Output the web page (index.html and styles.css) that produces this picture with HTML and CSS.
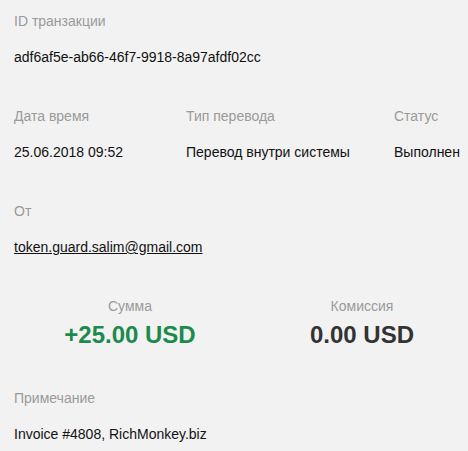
FILE: index.html
```html
<!DOCTYPE html>
<html>
<head>
  <meta charset="UTF-8" />
  <meta name="viewport" content="width=device-width, initial-scale=1.0" />
  <title>Транзакция</title>
  <link rel="stylesheet" href="styles.css">
</head>
<body>

  <div class="details">
    <div class="field">
      <div class="label">ID транзакции</div>
      <div class="value">adf6af5e-ab66-46f7-9918-8a97afdf02cc</div>
    </div>

    <div class="row">
      <div class="field col-date">
        <div class="label">Дата время</div>
        <div class="value">25.06.2018 09:52</div>
      </div>
      <div class="field col-type">
        <div class="label">Тип перевода</div>
        <div class="value">Перевод внутри системы</div>
      </div>
      <div class="field">
        <div class="label">Статус</div>
        <div class="value">Выполнен</div>
      </div>
    </div>

    <div class="field">
      <div class="label">От</div>
      <div class="value"><a href="#" class="email">token.guard.salim@gmail.com</a></div>
    </div>

    <div class="amounts">
      <div class="amount-box">
        <div class="label">Сумма</div>
        <div class="amount plus">+25.00 USD</div>
      </div>
      <div class="amount-box">
        <div class="label">Комиссия</div>
        <div class="amount">0.00 USD</div>
      </div>
    </div>

    <div class="field">
      <div class="label">Примечание</div>
      <div class="value">Invoice #4808, RichMonkey.biz</div>
    </div>
  </div>

</body>
</html>
```

FILE: styles.css
```css
body {
  font-family: Arial, "Liberation Sans", sans-serif;
  font-size: 14px;
  line-height: 20px;
  background: #f2f2f2;
  color: #111;
  margin: 0;
  padding: 11px 0 0 14px;
  overflow: hidden;
}

.details {
  display: flex;
  flex-direction: column;
  gap: 39px;
}

.label {
  color: #9a9a9a;
  margin-bottom: 16px;
}

.value {
  color: #111;
  white-space: nowrap;
}

.email {
  color: #111;
  text-decoration: underline;
}

.row {
  display: flex;
}

.col-date {
  width: 172px;
}

.col-type {
  width: 208px;
}

.amounts {
  display: grid;
  grid-template-columns: 232px 232px;
}

.amount-box {
  text-align: center;
}

.amount-box .label {
  margin-bottom: 5px;
}

.amount {
  font-size: 24px;
  font-weight: bold;
  line-height: 28px;
  color: #333;
}

.amount.plus {
  color: #1b8a4c;
}
```
